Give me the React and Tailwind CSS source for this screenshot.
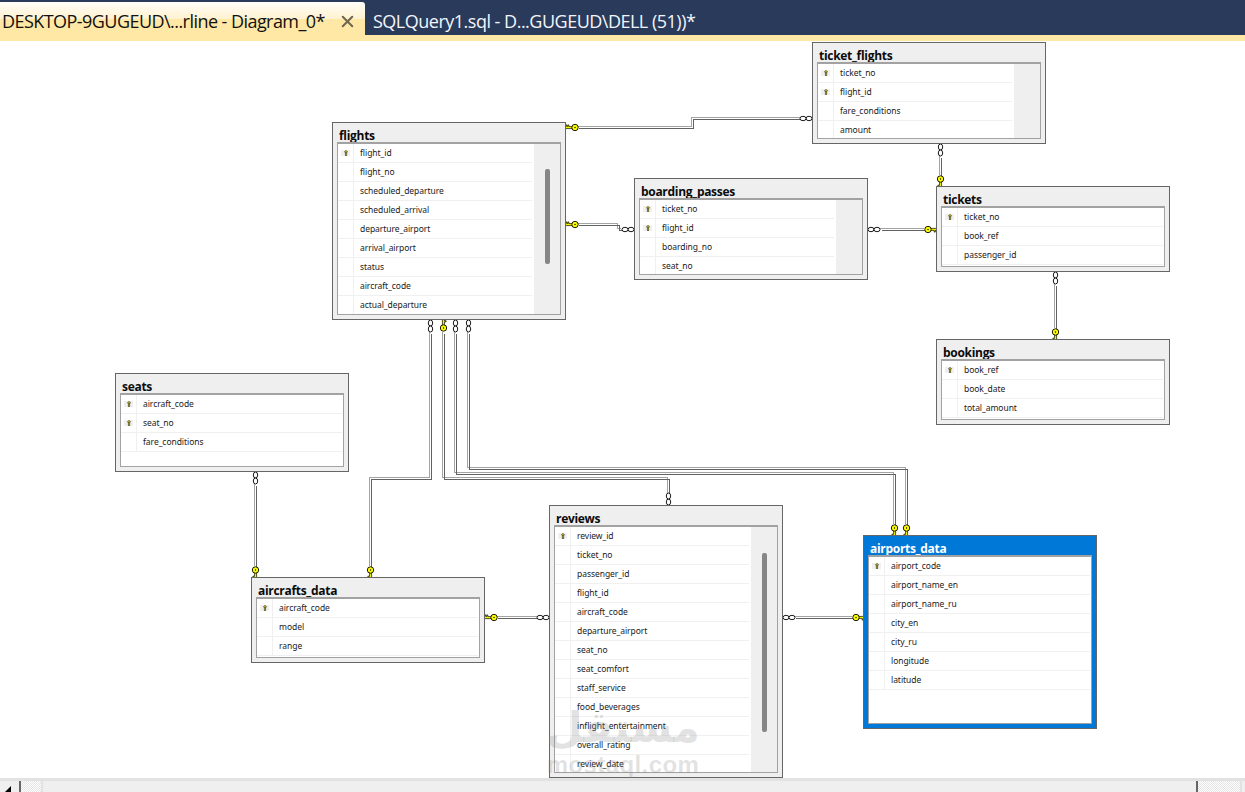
import { X } from 'lucide-react';

const tables = [
  { name: 'ticket_flights', pos: 'left-[812px] top-[1px] h-[102px]', keys: 2, scroll: true, rows: ['ticket_no', 'flight_id', 'fare_conditions', 'amount'] },
  { name: 'flights', pos: 'left-[332px] top-[81px] h-[198px]', keys: 1, scroll: true, thumb: 'mt-[25px] h-[95px]', rows: ['flight_id', 'flight_no', 'scheduled_departure', 'scheduled_arrival', 'departure_airport', 'arrival_airport', 'status', 'aircraft_code', 'actual_departure'] },
  { name: 'boarding_passes', pos: 'left-[634px] top-[137px] h-[102px]', keys: 2, scroll: true, rows: ['ticket_no', 'flight_id', 'boarding_no', 'seat_no'] },
  { name: 'tickets', pos: 'left-[936px] top-[145px] h-[86px]', keys: 1, rows: ['ticket_no', 'book_ref', 'passenger_id'] },
  { name: 'bookings', pos: 'left-[936px] top-[298px] h-[86px]', keys: 1, rows: ['book_ref', 'book_date', 'total_amount'] },
  { name: 'seats', pos: 'left-[115px] top-[332px] h-[99px]', keys: 2, rows: ['aircraft_code', 'seat_no', 'fare_conditions'] },
  { name: 'aircrafts_data', pos: 'left-[251px] top-[536px] h-[86px]', keys: 1, rows: ['aircraft_code', 'model', 'range'] },
  { name: 'reviews', pos: 'left-[549px] top-[464px] h-[273px]', keys: 1, scroll: true, thumb: 'mt-[26px] h-[179px]', rows: ['review_id', 'ticket_no', 'passenger_id', 'flight_id', 'aircraft_code', 'departure_airport', 'seat_no', 'seat_comfort', 'staff_service', 'food_beverages', 'inflight_entertainment', 'overall_rating', 'review_date'] },
  { name: 'airports_data', pos: 'left-[863px] top-[494px] h-[194px]', keys: 1, selected: true, rows: ['airport_code', 'airport_name_en', 'airport_name_ru', 'city_en', 'city_ru', 'longitude', 'latitude'] },
];

const wires = [
  [[578, 127.5], [692.5, 127.5], [692.5, 118.5], [801, 118.5]],
  [[578, 224.5], [618.5, 224.5], [618.5, 229.5], [622, 229.5]],
  [[881, 229.5], [925, 229.5]],
  [[940.5, 157], [940.5, 176]],
  [[1055.5, 285], [1055.5, 329]],
  [[255.5, 485], [255.5, 567]],
  [[430.5, 333], [430.5, 478.5], [370.5, 478.5], [370.5, 567]],
  [[443.5, 333], [443.5, 478.5], [668.5, 478.5], [668.5, 494]],
  [[455.5, 333], [455.5, 473.5], [894.5, 473.5], [894.5, 525]],
  [[468.5, 333], [468.5, 468.5], [906.5, 468.5], [906.5, 525]],
  [[497, 617.5], [538, 617.5]],
  [[795, 617.5], [853, 617.5]],
];

// bow sits at x,y and the shaft runs along +x before rotation
const keys = [
  [575, 127.5, 180], [575, 224.5, 180], [928, 229.5, 0], [940.5, 179, 90], [1055.5, 332, 90],
  [443.5, 328, -90], [255.5, 570, 90], [370.5, 570, 90], [494, 617.5, 180], [856, 617.5, 0],
  [894.5, 528, 90], [906.5, 528, 90],
];

// links: x,y is the table edge, rotation points away from it along +x
const links = [
  [812, 118.5, 180], [634, 229.5, 180], [868, 229.5, 0], [940.5, 144, 90], [1055.5, 272, 90],
  [255.5, 472, 90], [430.5, 320, 90], [455.5, 320, 90], [468.5, 320, 90], [668.5, 505, -90],
  [549, 617.5, 180], [783, 617.5, 0],
];

function Wire({ points }) {
  const shift = (d) => points.map(([x, y]) => `${x + d},${y + d}`).join(' ');
  return (
    <g fill="none" shapeRendering="crispEdges">
      <polyline points={shift(-1)} stroke="#a3a3a3" />
      <polyline points={shift(1)} stroke="#626262" />
    </g>
  );
}

function RelationKey({ x, y, rotate }) {
  return (
    <g transform={`translate(${x} ${y}) rotate(${rotate})`} stroke="#000" strokeWidth="0.7">
      <path d="M2.5 -1.1H10V0.9H9.2V2.6H8.2V0.9H7.2V2.6H6.2V0.9H2.5Z" fill="#ffff00" />
      <circle r="3.2" fill="#ffff00" strokeWidth="0.9" />
      <circle r="0.7" fill="#000" stroke="none" />
    </g>
  );
}

function RelationLink({ x, y, rotate }) {
  return (
    <g transform={`translate(${x} ${y}) rotate(${rotate})`} fill="#fff" stroke="#000" strokeWidth="0.9">
      <ellipse cx="3" rx="3" ry="2.2" />
      <ellipse cx="9" rx="3" ry="2.2" />
    </g>
  );
}

function KeyMark() {
  return (
    <svg width="9" height="6" viewBox="0 0 9 6" className="ml-[3px]">
      <rect width="9" height="6" fill="#efefef" />
      <path d="M5 0.3L6.5 2H5.6V5.7H4.4V2H3.5Z" fill="#ffee00" stroke="#111" strokeWidth="0.6" />
    </svg>
  );
}

function DbTable({ table }) {
  return (
    <div className={`absolute w-[234px] border border-[#666] px-1 pb-1 flex flex-col ${table.pos} ${table.selected ? 'bg-[#0078d7]' : 'bg-[#efefef]'}`}>
      <div className={`h-[19px] pl-[2px] pt-[5px] text-[12px] leading-[16px] font-bold font-['Open_Sans',sans-serif] tracking-[-0.3px] ${table.selected ? 'text-white' : 'text-[#0b0b0b]'}`}>
        {table.name}
      </div>
      <div className="flex-1 min-h-0 flex border border-t-2 border-[#a2a2a2] bg-white overflow-hidden">
        <div className={table.scroll ? 'w-[194px] mr-[2px]' : 'flex-1 mr-px'}>
          {table.rows.map((row, i) => (
            <div key={row} className="h-[19px] flex items-center border-b border-[#f0f0f0] font-['Noto_Sans',sans-serif] text-[8.5px] tracking-[-0.05px] text-[#1a1a1a]">
              <div className="w-[16px] h-full shrink-0 border-r border-[#f0f0f0] flex items-center">
                {i < table.keys && <KeyMark />}
              </div>
              <span className="pl-[6px] whitespace-nowrap">{row}</span>
            </div>
          ))}
        </div>
        {table.scroll && (
          <div className="flex-1 bg-[#efefef]">
            {table.thumb && <div className={`w-[5px] ml-[11px] bg-[#868686] rounded-[2px] ${table.thumb}`} />}
          </div>
        )}
      </div>
    </div>
  );
}

function ScrollEnd({ className }) {
  return <div className={`h-full bg-[repeating-conic-gradient(#e4e4e4_0_25%,#fff_0_50%)] bg-[length:2px_2px] ${className}`} />;
}

export default function App() {
  return (
    <div className="h-[792px] w-[1245px] overflow-hidden bg-white flex flex-col font-['Open_Sans',sans-serif]">
      {/* tab strip */}
      <div className="h-[35px] shrink-0 bg-[#2a3a5a] flex pt-[2px]">
        <div className="w-[365px] h-full pt-[5px] rounded-tr-[3px] bg-[linear-gradient(#fffdf8_0%,#fff2cf_52%,#ffe8a6_52%)] flex items-center pl-[2px] text-[#111]">
          <span className="w-[323px] text-[18px] whitespace-nowrap tracking-[-0.55px]">DESKTOP-9GUGEUD\...rline - Diagram_0*</span>
          <X className="ml-[13px] w-[19px] h-[19px] text-[#6f6750]" strokeWidth={2.6} />
        </div>
        <div className="pl-2 pt-[5px] h-full flex items-center text-[18px] text-[#f2f5fa] whitespace-nowrap tracking-[-0.5px]">SQLQuery1.sql - D...GUGEUD\DELL (51))*</div>
      </div>
      <div className="h-[6px] shrink-0 bg-[#ffe8a6]" />

      {/* diagram */}
      <div className="relative flex-1 min-h-0 overflow-hidden">
        <svg className="absolute left-0 top-0" width="1245" height="737" viewBox="0 41 1245 737">
          {wires.map((points, i) => <Wire key={i} points={points} />)}
          {keys.map(([x, y, rotate], i) => <RelationKey key={i} x={x} y={y} rotate={rotate} />)}
          {links.map(([x, y, rotate], i) => <RelationLink key={i} x={x} y={y} rotate={rotate} />)}
        </svg>
        {tables.map((table) => <DbTable key={table.name} table={table} />)}

        {/* watermark */}
        <div className="absolute left-[546px] top-[662px] w-[154px] text-center text-[#8c8c8c]/25 pointer-events-none">
          <div dir="rtl" className="h-[50px] text-[42px] leading-[50px] font-bold font-['DejaVu_Sans',sans-serif]">مستقل</div>
          <div className="text-[24px] leading-[24px] font-['Liberation_Sans',sans-serif] font-bold tracking-[0.4px]">mostaql.com</div>
        </div>
      </div>

      {/* bottom scrollbar */}
      <div className="h-[14px] shrink-0 border-t-[3px] border-[#e2e2e2] bg-[#efefef] flex">
        <div className="w-[19px] h-full relative">
          <div className="absolute left-[5px] bottom-0 w-0 h-0 border-l-[6px] border-l-transparent border-b-[6px] border-b-black" />
        </div>
        <div className="w-[2px] h-full bg-[#666]" />
        <ScrollEnd className="w-[20px]" />
        <div className="w-[2px] h-full bg-[#e2e2e2]" />
        <div className="flex-1" />
        <div className="w-[2px] h-full bg-[#666]" />
        <ScrollEnd className="w-[42px]" />
        <div className="w-[5px] h-full border-l-2 border-[#e2e2e2]" />
      </div>
    </div>
  );
}
